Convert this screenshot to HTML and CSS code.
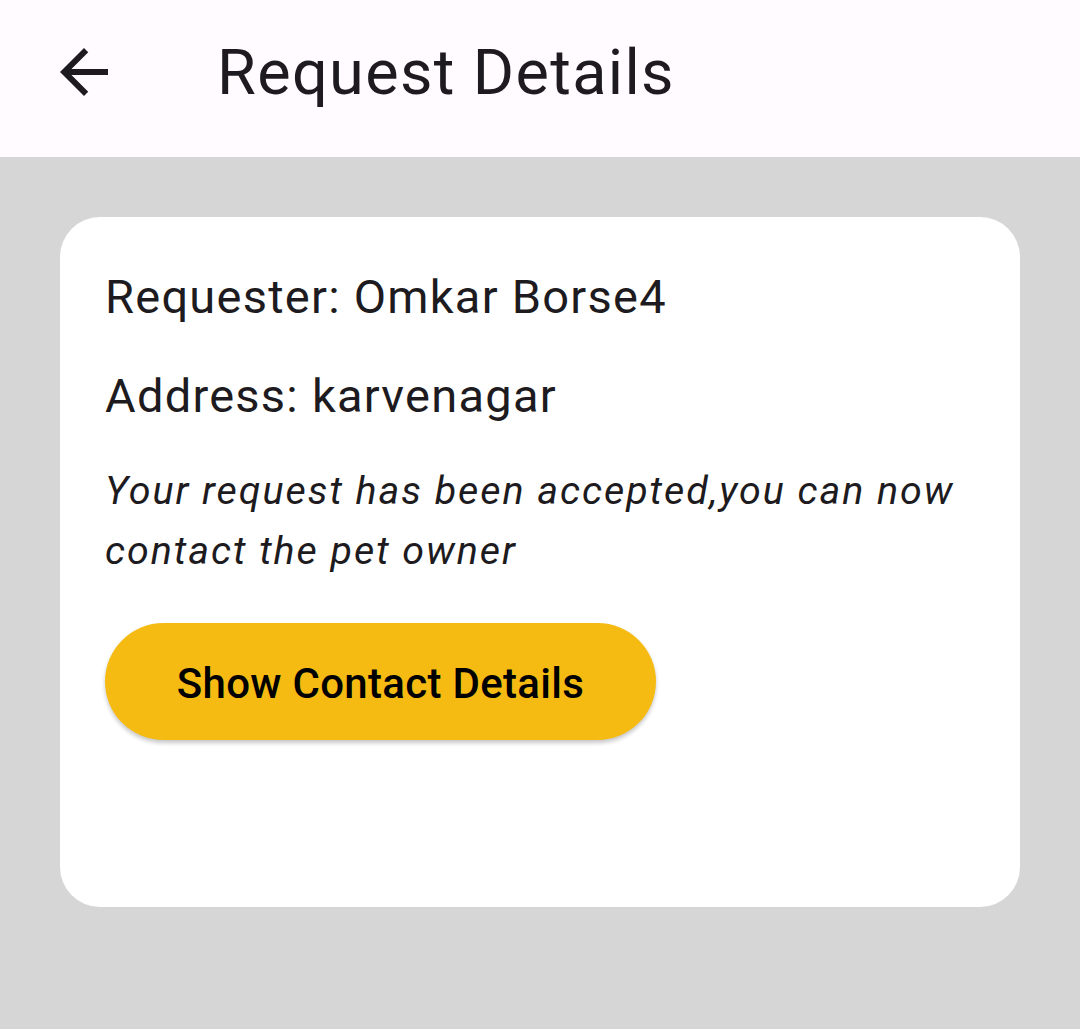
FILE: index.html
```html
<!DOCTYPE html>
<html>
<head>
<meta charset="utf-8">
<link rel="stylesheet" href="styles.css">
</head>
<body>
<header class="appbar">
  <button class="back" aria-label="Back">
    <svg width="72" height="72" viewBox="0 0 24 24"><path d="M20 11H7.83l5.59-5.59L12 4l-8 8 8 8 1.41-1.41L7.83 13H20v-2z" fill="#1d1b20"/></svg>
  </button>
  <h1 class="title">Request Details</h1>
</header>
<main class="content">
  <section class="card">
    <p class="line">Requester: Omkar Borse4</p>
    <p class="line addr">Address: karvenagar</p>
    <p class="note">Your request has been accepted,you can now contact the pet owner</p>
    <button class="cta">Show Contact Details</button>
  </section>
</main>
</body>
</html>
```
FILE: styles.css
```css
* { box-sizing: border-box; }
html, body { margin: 0; padding: 0; }
body {
  width: 1080px;
  height: 1029px;
  background: #d6d6d6;
  font-family: Roboto, "Noto Sans", sans-serif;
  color: #1d1b20;
  overflow: hidden;
}
.appbar {
  height: 157px;
  background: #fffbfe;
  display: flex;
  align-items: center;
}
.back {
  width: 72px;
  height: 72px;
  margin-left: 48px;
  margin-top: -14px;
  padding: 0;
  border: 0;
  background: none;
  display: flex;
}
.title {
  margin: -12px 0 0 97px;
  font-size: 63px;
  font-weight: 400;
  line-height: 74px;
  letter-spacing: 1.35px;
  color: #1d1b20;
}
.content {
  padding: 60px 60px 0 60px;
}
.card {
  background: #fff;
  border-radius: 40px;
  height: 690px;
  padding: 52px 46px 0 45px;
  display: flex;
  flex-direction: column;
  align-items: flex-start;
}
.line {
  margin: 0;
  font-size: 47px;
  line-height: 56px;
  letter-spacing: 1.25px;
}
.addr { margin-top: 43px; }
.note {
  margin: 37px 0 0 0;
  font-size: 39.4px;
  line-height: 60px;
  font-style: italic;
  letter-spacing: 1.97px;
}
.cta {
  margin-top: 42px;
  width: 551px;
  height: 117px;
  border: 0;
  border-radius: 59px;
  background: #f5bb12;
  color: #000;
  font-family: Roboto, "Noto Sans", sans-serif;
  font-size: 42px;
  font-weight: 500;
  letter-spacing: 0.3px;
  box-shadow: 0 3px 4px rgba(0,0,0,0.22);
  padding: 4px 0 0 0;
}
```
